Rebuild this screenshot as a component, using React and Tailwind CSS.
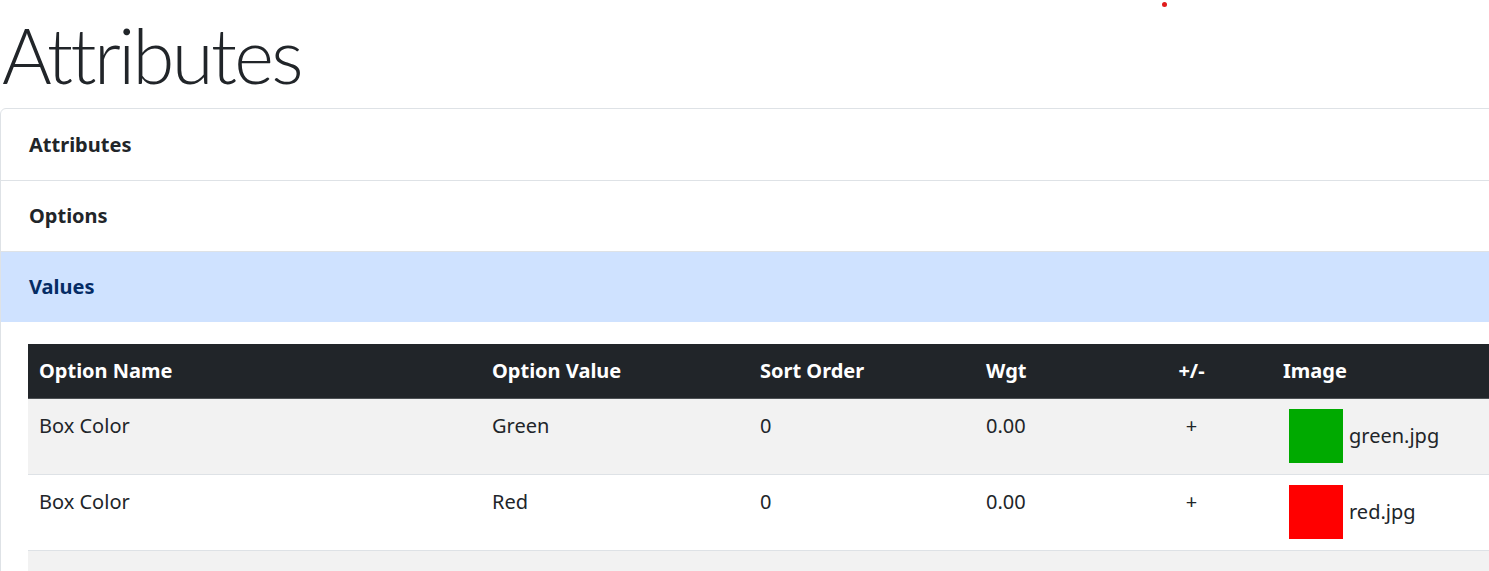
import React from "react";

const rows = [
  { name: "Box Color", value: "Green", sort: "0", wgt: "0.00", sign: "+", img: "green.jpg", swatch: "bg-[#00aa00]", stripe: "bg-[#f2f2f2]" },
  { name: "Box Color", value: "Red", sort: "0", wgt: "0.00", sign: "+", img: "red.jpg", swatch: "bg-[#ff0000]", stripe: "bg-white" },
];

export default function App() {
  return (
    <div className="relative w-full h-[571px] overflow-hidden bg-white text-[#212529] font-['Noto_Sans',sans-serif]">
      {/* notification dot */}
      <span className="absolute left-[1162px] top-[2px] w-[5px] h-[5px] rounded-full bg-[#e01b1b]" />

      <div className="w-[1600px]">
        <h1 className="pl-[2px] pt-[10px] pb-[8px] text-[76px] leading-[90px] tracking-[-2.6px] font-light font-['Lato',sans-serif] text-[#212529]">
          Attributes
        </h1>

        <div className="border border-[#dee2e6] rounded-tl-[6px]">
          <div className="h-[72px] flex items-center px-[28px] text-[20px] font-bold border-b border-[#dee2e6]">
            Attributes
          </div>
          <div className="h-[71px] flex items-center px-[28px] text-[20px] font-bold border-b border-[#dee2e6]">
            Options
          </div>
          <div className="h-[70px] flex items-center px-[28px] text-[20px] font-bold bg-[#cfe2ff] text-[#052c65]">
            Values
          </div>

          <div className="pl-[27px] pt-[22px]">
            <table className="table-fixed border-collapse text-[20px] text-left">
              <colgroup>
                <col className="w-[453px]" />
                <col className="w-[268px]" />
                <col className="w-[226px]" />
                <col className="w-[142px]" />
                <col className="w-[155px]" />
                <col className="w-[300px]" />
              </colgroup>
              <thead>
                <tr className="bg-[#212529] text-white h-[54px] border-b border-[#4d5154]">
                  <th className="px-[11px] font-bold">Option Name</th>
                  <th className="px-[11px] font-bold">Option Value</th>
                  <th className="px-[11px] font-bold">Sort Order</th>
                  <th className="px-[11px] font-bold">Wgt</th>
                  <th className="pl-[8px] pr-[14px] font-bold text-center">+/-</th>
                  <th className="px-[11px] font-bold">Image</th>
                </tr>
              </thead>
              <tbody>
                {rows.map((r, i) => (
                  <tr key={i} className={`${r.stripe} border-b border-[#dee2e6]`}>
                    <td className="px-[11px] pt-[12px] pb-[9px] align-top leading-[30px]">{r.name}</td>
                    <td className="px-[11px] pt-[12px] pb-[9px] align-top leading-[30px]">{r.value}</td>
                    <td className="px-[11px] pt-[12px] pb-[9px] align-top leading-[30px]">{r.sort}</td>
                    <td className="px-[11px] pt-[12px] pb-[9px] align-top leading-[30px]">{r.wgt}</td>
                    <td className="pl-[8px] pr-[14px] pt-[12px] pb-[9px] align-top leading-[30px] text-center">{r.sign}</td>
                    <td className="px-[17px] pt-[10px] pb-[11px] align-top">
                      <div className="flex items-center gap-[6px]">
                        <div className={`w-[54px] h-[54px] ${r.swatch}`} />
                        <span className="leading-[30px]">{r.img}</span>
                      </div>
                    </td>
                  </tr>
                ))}
                <tr className="bg-[#f2f2f2] h-[76px]">
                  <td colSpan={6} />
                </tr>
              </tbody>
            </table>
          </div>
        </div>
      </div>
    </div>
  );
}
